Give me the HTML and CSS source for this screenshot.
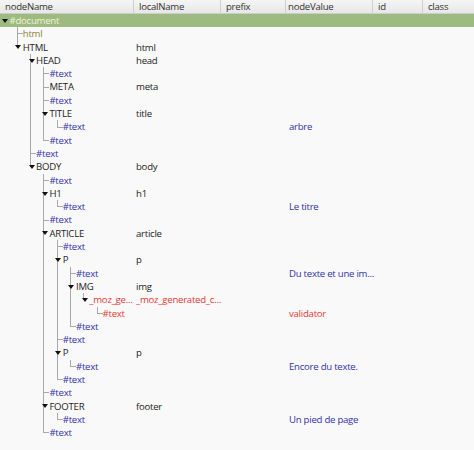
FILE: index.html
```html
<!DOCTYPE html>
<html>
<head>
<meta charset="utf-8">
<link rel="stylesheet" href="styles.css">
</head>
<body>
<div class="tree">
  <div class="hdr">
    <div class="h">nodeName</div>
    <div class="h">localName</div>
    <div class="h">prefix</div>
    <div class="h hv">nodeValue</div>
    <div class="h">id</div>
    <div class="h last">class</div>
  </div>
  <div class="rows">
    <div class="row sel"><div class="n"><span class="t"><span class="ar"></span></span><span class="lbl">#document</span></div></div>
    <div class="row"><div class="n"><span class="g"></span><span class="t ml"></span><span class="olive">html</span></div></div>
    <div class="row"><div class="n"><span class="g"></span><span class="t l"><span class="ar"></span></span><span>HTML</span></div><div class="ln">html</div></div>
    <div class="row"><div class="n"><span class="g"></span><span class="g"></span><span class="t m"><span class="ar"></span></span><span>HEAD</span></div><div class="ln">head</div></div>
    <div class="row"><div class="n"><span class="g"></span><span class="g"></span><span class="g v"></span><span class="t ml"></span><span class="blue">#text</span></div></div>
    <div class="row"><div class="n"><span class="g"></span><span class="g"></span><span class="g v"></span><span class="t ml"></span><span>META</span></div><div class="ln">meta</div></div>
    <div class="row"><div class="n"><span class="g"></span><span class="g"></span><span class="g v"></span><span class="t ml"></span><span class="blue">#text</span></div></div>
    <div class="row"><div class="n"><span class="g"></span><span class="g"></span><span class="g v"></span><span class="t m"><span class="ar"></span></span><span>TITLE</span></div><div class="ln">title</div></div>
    <div class="row"><div class="n"><span class="g"></span><span class="g"></span><span class="g v"></span><span class="g v"></span><span class="t ll"></span><span class="blue">#text</span></div><div class="nv blue">arbre</div></div>
    <div class="row"><div class="n"><span class="g"></span><span class="g"></span><span class="g v"></span><span class="t ll"></span><span class="blue">#text</span></div></div>
    <div class="row"><div class="n"><span class="g"></span><span class="g"></span><span class="t ml"></span><span class="blue">#text</span></div></div>
    <div class="row"><div class="n"><span class="g"></span><span class="g"></span><span class="t l"><span class="ar"></span></span><span>BODY</span></div><div class="ln">body</div></div>
    <div class="row"><div class="n"><span class="g"></span><span class="g"></span><span class="g"></span><span class="t ml"></span><span class="blue">#text</span></div></div>
    <div class="row"><div class="n"><span class="g"></span><span class="g"></span><span class="g"></span><span class="t m"><span class="ar"></span></span><span>H1</span></div><div class="ln">h1</div></div>
    <div class="row"><div class="n"><span class="g"></span><span class="g"></span><span class="g"></span><span class="g v"></span><span class="t ll"></span><span class="blue">#text</span></div><div class="nv blue">Le titre</div></div>
    <div class="row"><div class="n"><span class="g"></span><span class="g"></span><span class="g"></span><span class="t ml"></span><span class="blue">#text</span></div></div>
    <div class="row"><div class="n"><span class="g"></span><span class="g"></span><span class="g"></span><span class="t m"><span class="ar"></span></span><span>ARTICLE</span></div><div class="ln">article</div></div>
    <div class="row"><div class="n"><span class="g"></span><span class="g"></span><span class="g"></span><span class="g v"></span><span class="t ml"></span><span class="blue">#text</span></div></div>
    <div class="row"><div class="n"><span class="g"></span><span class="g"></span><span class="g"></span><span class="g v"></span><span class="t m"><span class="ar"></span></span><span>P</span></div><div class="ln">p</div></div>
    <div class="row"><div class="n"><span class="g"></span><span class="g"></span><span class="g"></span><span class="g v"></span><span class="g v"></span><span class="t ml"></span><span class="blue">#text</span></div><div class="nv blue">Du texte et une im...</div></div>
    <div class="row"><div class="n"><span class="g"></span><span class="g"></span><span class="g"></span><span class="g v"></span><span class="g v"></span><span class="t m"><span class="ar"></span></span><span>IMG</span></div><div class="ln">img</div></div>
    <div class="row"><div class="n"><span class="g"></span><span class="g"></span><span class="g"></span><span class="g v"></span><span class="g v"></span><span class="g v"></span><span class="t l"><span class="ar"></span></span><span class="red">_moz_ge...</span></div><div class="ln red">_moz_generated_c...</div></div>
    <div class="row"><div class="n"><span class="g"></span><span class="g"></span><span class="g"></span><span class="g v"></span><span class="g v"></span><span class="g v"></span><span class="g"></span><span class="t ll"></span><span class="red">#text</span></div><div class="nv red">validator</div></div>
    <div class="row"><div class="n"><span class="g"></span><span class="g"></span><span class="g"></span><span class="g v"></span><span class="g v"></span><span class="t ll"></span><span class="blue">#text</span></div></div>
    <div class="row"><div class="n"><span class="g"></span><span class="g"></span><span class="g"></span><span class="g v"></span><span class="t ml"></span><span class="blue">#text</span></div></div>
    <div class="row"><div class="n"><span class="g"></span><span class="g"></span><span class="g"></span><span class="g v"></span><span class="t m"><span class="ar"></span></span><span>P</span></div><div class="ln">p</div></div>
    <div class="row"><div class="n"><span class="g"></span><span class="g"></span><span class="g"></span><span class="g v"></span><span class="g v"></span><span class="t ll"></span><span class="blue">#text</span></div><div class="nv blue">Encore du texte.</div></div>
    <div class="row"><div class="n"><span class="g"></span><span class="g"></span><span class="g"></span><span class="g v"></span><span class="t ll"></span><span class="blue">#text</span></div></div>
    <div class="row"><div class="n"><span class="g"></span><span class="g"></span><span class="g"></span><span class="t ml"></span><span class="blue">#text</span></div></div>
    <div class="row"><div class="n"><span class="g"></span><span class="g"></span><span class="g"></span><span class="t m"><span class="ar"></span></span><span>FOOTER</span></div><div class="ln">footer</div></div>
    <div class="row"><div class="n"><span class="g"></span><span class="g"></span><span class="g"></span><span class="g v"></span><span class="t ll"></span><span class="blue">#text</span></div><div class="nv blue">Un pied de page</div></div>
    <div class="row"><div class="n"><span class="g"></span><span class="g"></span><span class="g"></span><span class="t ll"></span><span class="blue">#text</span></div></div>
  </div>
</div>
</body>
</html>
```
FILE: styles.css
```css
html, body {
  margin: 0;
  padding: 0;
}
body {
  width: 474px;
  height: 450px;
  overflow: hidden;
  background: #f9f9f9;
  font-family: "Open Sans", "Noto Sans", sans-serif;
  font-size: 9.6px;
  letter-spacing: -0.25px;
  color: #1e1e1e;
}
.tree {
  display: flex;
  flex-direction: column;
}
.hdr {
  display: grid;
  grid-template-columns: 134px 87px 65px 87px 50px 51px;
  height: 14px;
  box-sizing: border-box;
  background: linear-gradient(#f5f5f5, #e7e7e7);
  border-bottom: 1px solid #cdcdcd;
}
.h {
  padding-left: 5px;
  line-height: 13px;
  color: #333;
  border-right: 1px solid #cfcfcf;
  white-space: nowrap;
  overflow: hidden;
}
.h.hv { padding-left: 2px; }
.h.last { border-right: none; }
.rows {
  display: flex;
  flex-direction: column;
}
.row {
  display: grid;
  grid-template-columns: 134px 87px 65px 87px 50px 51px;
  height: 13.3px;
  line-height: 13.3px;
  white-space: nowrap;
}
.row.sel {
  background: #9dbb80;
}
.row.sel .lbl {
  color: #f1f3d8;
}
.n {
  display: flex;
  overflow: hidden;
}
.ln {
  grid-column: 2;
  padding-left: 2px;
}
.nv {
  grid-column: 4;
  padding-left: 3px;
}
.g {
  flex: none;
  width: 13.3px;
}
.g.v {
  background: linear-gradient(#a9a9a9, #a9a9a9) 3.5px 0 / 1px 100% no-repeat;
}
.t {
  flex: none;
  width: 9.5px;
  display: flex;
  align-items: center;
}
.t.m {
  background: linear-gradient(#a9a9a9, #a9a9a9) 3.5px 0 / 1px 100% no-repeat;
}
.t.l {
  background: linear-gradient(#a9a9a9, #a9a9a9) 3.5px 0 / 1px 50% no-repeat;
}
.t.ml {
  background:
    linear-gradient(#a9a9a9, #a9a9a9) 3.5px 0 / 1px 100% no-repeat,
    linear-gradient(#a9a9a9, #a9a9a9) 3.5px 50% / 6px 1px no-repeat;
}
.t.ll {
  background:
    linear-gradient(#a9a9a9, #a9a9a9) 3.5px 0 / 1px 50% no-repeat,
    linear-gradient(#a9a9a9, #a9a9a9) 3.5px 50% / 6px 1px no-repeat;
}
.ar {
  width: 0;
  height: 0;
  margin-left: 2px;
  border-left: 3px solid transparent;
  border-right: 3px solid transparent;
  border-top: 4px solid #111;
}
.blue { color: #3232a8; }
.red { color: #e23a36; }
.olive { color: #8e8436; }
```
